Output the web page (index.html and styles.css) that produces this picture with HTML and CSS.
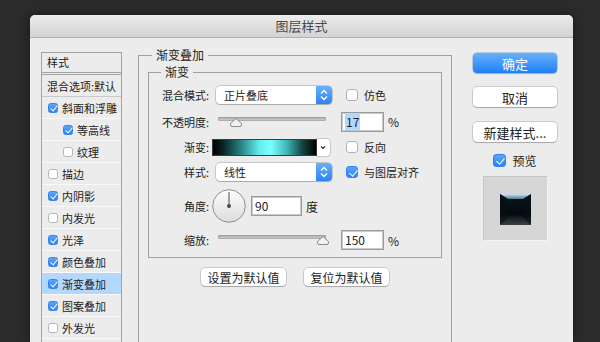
FILE: index.html
```html
<!DOCTYPE html>
<html lang="zh-CN">
<head>
  <meta charset="UTF-8">
  <meta name="viewport" content="width=device-width, initial-scale=1.0">
  <title>图层样式</title>
  <link rel="stylesheet" href="styles.css">
</head>
<body>
  <div class="dialog">
    <div class="titlebar">图层样式</div>

    <div class="dialog-body">
      <ul class="style-list">
        <li class="list-head">样式</li>
        <li class="list-blend">混合选项:默认</li>
        <li><span class="cb on"></span>斜面和浮雕</li>
        <li class="sub"><span class="cb on"></span>等高线</li>
        <li class="sub"><span class="cb"></span>纹理</li>
        <li><span class="cb"></span>描边</li>
        <li><span class="cb on"></span>内阴影</li>
        <li><span class="cb"></span>内发光</li>
        <li><span class="cb on"></span>光泽</li>
        <li><span class="cb on"></span>颜色叠加</li>
        <li class="active"><span class="cb on"></span>渐变叠加</li>
        <li><span class="cb on"></span>图案叠加</li>
        <li><span class="cb"></span>外发光</li>
      </ul>

      <fieldset class="panel">
        <legend>渐变叠加</legend>

        <fieldset class="group">
          <legend>渐变</legend>
          <div class="grad-grid">
            <label class="lbl">混合模式:</label>
            <div class="select">
              <span class="select-text">正片叠底</span>
              <span class="stepper">
                <svg width="16" height="18" viewBox="0 0 16 18"><path d="M5 7.5 L8 4.5 L11 7.5 M5 10.5 L8 13.5 L11 10.5" fill="none" stroke="#fff" stroke-width="1.4"/></svg>
              </span>
            </div>
            <div class="check"><span class="box"></span>仿色</div>

            <label class="lbl">不透明度:</label>
            <div class="slider">
              <span class="track"></span>
              <span class="thumb" style="left: calc(17% - 6px)">
                <svg width="12" height="9" viewBox="0 0 12 9"><path d="M6 0.5 L11.5 5.5 L11.5 7 Q11.5 8.5 10 8.5 L2 8.5 Q0.5 8.5 0.5 7 L0.5 5.5 Z" fill="#f2f2f2" stroke="#8a8a8a"/></svg>
              </span>
            </div>
            <div class="field"><span class="num"><span class="sel">17</span></span><span class="unit">%</span></div>

            <label class="lbl">渐变:</label>
            <div class="gradient">
              <span class="gradient-bar"></span>
              <span class="gradient-drop">
                <svg width="12" height="17" viewBox="0 0 12 17"><path d="M4 7.5 L6 9.5 L8 7.5" fill="none" stroke="#333" stroke-width="1.2"/></svg>
              </span>
            </div>
            <div class="check"><span class="box"></span>反向</div>

            <label class="lbl">样式:</label>
            <div class="select">
              <span class="select-text">线性</span>
              <span class="stepper">
                <svg width="16" height="18" viewBox="0 0 16 18"><path d="M5 7.5 L8 4.5 L11 7.5 M5 10.5 L8 13.5 L11 10.5" fill="none" stroke="#fff" stroke-width="1.4"/></svg>
              </span>
            </div>
            <div class="check"><span class="box on"></span>与图层对齐</div>

            <label class="lbl">角度:</label>
            <div class="angle">
              <svg class="dial" width="34" height="34" viewBox="0 0 34 34">
                <defs>
                  <linearGradient id="dialFill" x1="0" y1="0" x2="0" y2="1">
                    <stop offset="0" stop-color="#fdfdfd"/>
                    <stop offset="1" stop-color="#dcdcdc"/>
                  </linearGradient>
                </defs>
                <circle cx="17" cy="17" r="16.3" fill="url(#dialFill)" stroke="#8d8d8d"/>
                <line x1="17" y1="17" x2="17" y2="3" stroke="#4a4a4a" stroke-width="1"/>
                <circle cx="17" cy="17" r="2" fill="#4a4a4a"/>
              </svg>
              <span class="num wide">90</span>
              <span class="unit">度</span>
            </div>
            <div></div>

            <label class="lbl">缩放:</label>
            <div class="slider">
              <span class="track"></span>
              <span class="thumb" style="left: calc(100% - 9px)">
                <svg width="12" height="9" viewBox="0 0 12 9"><path d="M6 0.5 L11.5 5.5 L11.5 7 Q11.5 8.5 10 8.5 L2 8.5 Q0.5 8.5 0.5 7 L0.5 5.5 Z" fill="#f2f2f2" stroke="#8a8a8a"/></svg>
              </span>
            </div>
            <div class="field"><span class="num">150</span><span class="unit">%</span></div>
          </div>
        </fieldset>

        <div class="defaults">
          <button class="btn small">设置为默认值</button>
          <button class="btn small">复位为默认值</button>
        </div>
      </fieldset>

      <div class="actions">
        <button class="btn primary">确定</button>
        <button class="btn">取消</button>
        <button class="btn">新建样式...</button>
        <div class="check preview-check"><span class="box on"></span>预览</div>
        <div class="preview">
          <svg width="31" height="31" viewBox="0 0 31 31">
            <defs>
              <linearGradient id="shine" x1="0" y1="0" x2="0" y2="1">
                <stop offset="0" stop-color="#d2e6f5"/>
                <stop offset="1" stop-color="#4f7896"/>
              </linearGradient>
              <linearGradient id="base" x1="0" y1="0" x2="0" y2="1">
                <stop offset="0" stop-color="#0c1a20"/>
                <stop offset="0.65" stop-color="#04080a"/>
                <stop offset="0.8" stop-color="#1c2326"/>
                <stop offset="1" stop-color="#3a4244"/>
              </linearGradient>
            </defs>
            <rect width="31" height="31" fill="url(#base)"/>
            <polygon points="0,0 31,0 23,5 8,5" fill="url(#shine)"/>
            <polygon points="0,0 8,5 8,24 0,31" fill="#061014" opacity="0.6"/>
            <polygon points="31,0 23,5 23,24 31,31" fill="#061014" opacity="0.6"/>
          </svg>
        </div>
      </div>
    </div>
  </div>
</body>
</html>
```

FILE: styles.css
```css
* {
  box-sizing: border-box;
}
html,
body {
  margin: 0;
  height: 100%;
}
body {
  background-color: #2b2b2b;
  font-family: "Noto Sans CJK SC", "Liberation Sans", sans-serif;
  font-size: 11px;
  color: #222;
  overflow: hidden;
}
.dialog {
  margin: 15px 0 0 30px;
  width: 543px;
  height: 327px;
  overflow: hidden;
  background-color: #ececec;
  border-radius: 5px 5px 0 0;
  box-shadow: 0 0 10px rgba(0,0,0,0.45);
}
.titlebar {
  height: 23px;
  border-bottom: 1px solid #b2b2b2;
  border-radius: 5px 5px 0 0;
  background: linear-gradient(#ececec, #d3d3d3);
  text-align: center;
  font-size: 13px;
  line-height: 22px;
  color: #4b4b4b;
}
.dialog-body {
  display: flex;
  align-items: flex-start;
  padding: 10px 0 0 11px;
}

/* left list */
.style-list {
  list-style: none;
  margin: 4px 0 0;
  padding: 0;
  width: 81px;
  height: 300px;
  border: 1px solid #a3a3a3;
  border-bottom: 0;
}
.style-list li {
  height: 22px;
  display: flex;
  align-items: center;
  padding-left: 6px;
  border-bottom: 1px solid #f9f9f9;
  white-space: nowrap;
}
.style-list li.list-head {
  height: 22px;
  padding-left: 5px;
  padding-bottom: 2px;
  border-bottom: 3px double #a3a3a3;
}
.style-list li.list-blend {
  padding-left: 5px;
  border-bottom-color: #c9c9c9;
}
.style-list li.sub {
  padding-left: 21px;
}
.style-list li.active {
  background-color: #b4d7fe;
}
.cb {
  position: relative;
  width: 10px;
  height: 10px;
  margin-right: 4px;
  border: 1px solid #b4b4b4;
  border-radius: 2.5px;
  background: #fff;
  flex-shrink: 0;
}
.cb.on,
.box.on {
  border-color: #2f84f3;
  background: linear-gradient(#5aa6fa, #2d82f4);
}
.cb.on::after,
.box.on::after {
  content: "";
  position: absolute;
  left: 2.5px;
  top: 0.5px;
  width: 3px;
  height: 6px;
  border: solid #fff;
  border-width: 0 1.5px 1.5px 0;
  transform: rotate(40deg);
}

/* main panel */
.panel {
  margin: 0 0 0 16px;
  padding: 0 9px;
  width: 314px;
  min-width: 0;
  height: 310px;
  border: 1px solid #a0a0a0;
}
.panel > legend,
.group > legend {
  margin-left: 4px;
  padding: 0 4px;
  font-size: 12px;
  line-height: 14px;
}
.group {
  margin: 3px 0 0;
  padding: 3px 0 0;
  min-width: 0;
  height: 193px;
  border: 1px solid #a0a0a0;
}
.group > legend {
  margin-left: 12px;
}
.grad-grid {
  display: grid;
  grid-template-columns: 63px 129px 1fr;
  grid-template-rows: 26px 27px 24px 26px 42px 26px;
  align-items: center;
}
.lbl {
  text-align: right;
  padding-right: 3px;
  white-space: nowrap;
}
.select {
  display: flex;
  margin-left: 4px;
  width: 116px;
  height: 18px;
  background: #fff;
  border-radius: 4px;
  box-shadow: 0 0 0 0.5px rgba(0,0,0,0.3), 0 1px 1px rgba(0,0,0,0.15);
}
.select-text {
  flex: 1;
  padding-left: 8px;
  line-height: 18px;
}
.stepper {
  width: 16px;
  height: 18px;
  border-radius: 0 4px 4px 0;
  background: linear-gradient(#69aff9, #2c83f5);
}
.stepper svg {
  display: block;
}
.check {
  display: flex;
  align-items: center;
  margin-left: 5px;
  white-space: nowrap;
}
.box {
  position: relative;
  width: 12px;
  height: 12px;
  margin-right: 6px;
  border: 1px solid #b0b0b0;
  border-radius: 3px;
  background: #fff;
}
.box.on::after {
  left: 3.5px;
  top: 1px;
  width: 3.5px;
  height: 7px;
}
.slider {
  position: relative;
  margin-left: 6px;
  width: 108px;
  height: 12px;
}
.track {
  position: absolute;
  left: 0;
  right: 0;
  top: 1px;
  height: 4px;
  border-radius: 2px;
  background: linear-gradient(#a9a9a9, #d2d2d2);
  box-shadow: inset 0 0 0 0.5px #8f8f8f;
}
.thumb {
  position: absolute;
  top: 2px;
  width: 12px;
  height: 9px;
}
.thumb svg {
  display: block;
}
.field {
  display: flex;
  align-items: center;
}
.num {
  display: inline-block;
  width: 43px;
  height: 20px;
  padding-left: 3px;
  border: 1px solid #9b9b9b;
  box-shadow: inset 0 0 0 1px #c9c9c9;
  background: #fff;
  font-size: 12px;
  line-height: 18px;
}
.num.wide {
  width: 51px;
  margin-left: 5px;
}
.sel {
  background: #b3d7ff;
  padding: 0 1px;
}
.unit {
  margin-left: 4px;
  font-size: 12px;
}
.gradient {
  display: flex;
  width: 118px;
  height: 17px;
}
.gradient-bar {
  flex: 1;
  border: 1px solid #3c3c3c;
  background: linear-gradient(to right, #000 0%, #0a2424 10%, #2a8888 28%, #62eded 45%, #7effff 56%, #3fb4b4 72%, #174848 86%, #000 100%);
}
.gradient-drop {
  width: 13px;
  background: #fff;
  border-radius: 0 3px 3px 0;
  box-shadow: 0 0 0 0.5px rgba(0,0,0,0.3);
}
.gradient-drop svg {
  display: block;
}
.angle {
  display: flex;
  align-items: center;
}
.dial {
  display: block;
}
.defaults {
  display: flex;
  justify-content: center;
  gap: 18px;
  margin-top: 10px;
}

/* buttons */
.btn {
  width: 84px;
  height: 20px;
  padding: 0;
  border: none;
  border-radius: 4px;
  background: #fff;
  box-shadow: 0 0 0 0.5px rgba(0,0,0,0.28), 0 1px 1px rgba(0,0,0,0.18);
  font-family: inherit;
  font-size: 13px;
  color: #222;
}
.btn.small {
  width: 85px;
  height: 18px;
  font-size: 12px;
}
.btn.primary {
  background: linear-gradient(#6ab1fa, #1e80f5);
  color: #fff;
  box-shadow: 0 0 0 0.5px rgba(0,60,160,0.4), 0 1px 1px rgba(0,0,0,0.15);
}

/* right column */
.actions {
  display: flex;
  flex-direction: column;
  align-items: center;
  gap: 14px;
  margin: 5px 0 0 21px;
  width: 84px;
}
.actions .btn + .btn + .btn {
  margin-top: 1px;
}
.preview-check {
  margin: -4px 0 0;
  font-size: 12px;
}
.preview-check .box {
  width: 13px;
  height: 13px;
}
.preview {
  display: flex;
  align-items: center;
  justify-content: center;
  margin-top: -7px;
  width: 65px;
  height: 65px;
  padding-top: 2px;
  border: 1px solid #c6c6c6;
  border-right-color: #f4f4f4;
  border-bottom-color: #f4f4f4;
  background: #d6d6d6;
}
.preview svg {
  display: block;
}
```
